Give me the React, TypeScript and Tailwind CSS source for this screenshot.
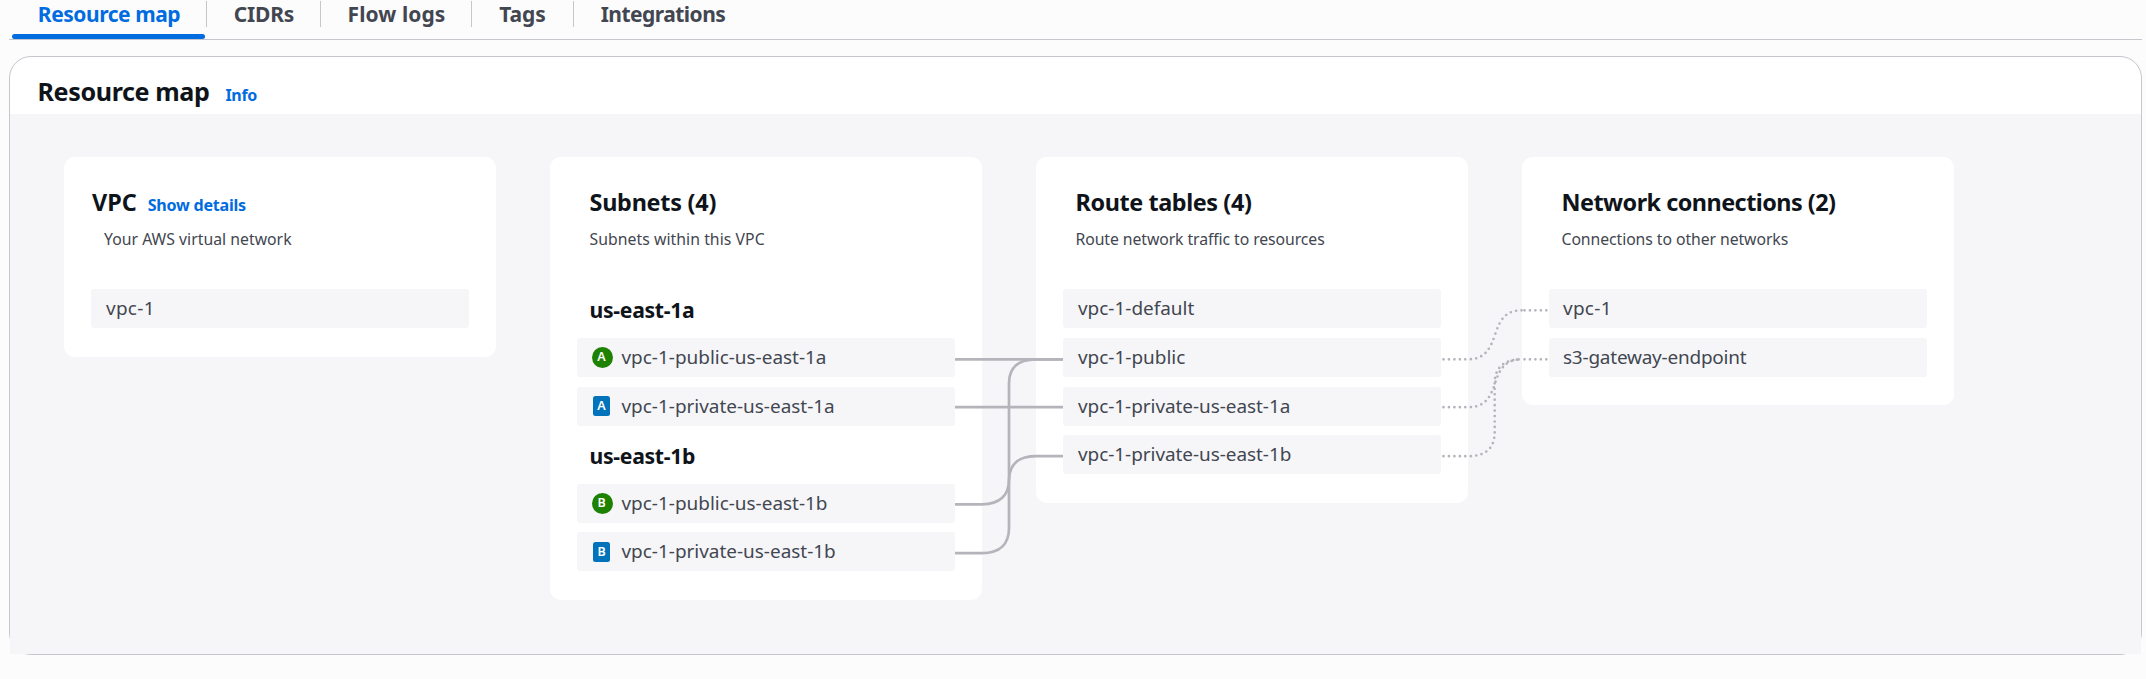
import type { ReactNode } from "react";

type Zone = "A" | "B";

function Item({ children, kind, zone }: { children: ReactNode; kind?: "public" | "private"; zone?: Zone }) {
  return (
    <li className="flex h-[39px] items-center rounded-[3px] bg-[#f6f6f9] pl-[15px] text-[18.95px] leading-[39px] text-[#424650]">
      {kind === "public" && (
        <span className="mr-[8.5px] flex size-[21px] items-center justify-center rounded-full bg-[#1d8102] pr-[2px] pb-px text-[12.5px] leading-[20px] font-semibold text-white">
          {zone}
        </span>
      )}
      {kind === "private" && (
        <span className="mr-[11.5px] mb-[0.5px] ml-[1px] flex h-[20px] w-[17px] items-center justify-center rounded-[2.5px] bg-[#0073bb] text-[12.5px] leading-[20px] font-semibold text-white">
          {zone}
        </span>
      )}
      {children}
    </li>
  );
}

function Items({ children }: { children: ReactNode }) {
  return <ul className="flex flex-col gap-[9.75px]">{children}</ul>;
}

function Card({ title, description, children }: { title: ReactNode; description: ReactNode; children: ReactNode }) {
  return (
    <section className="w-[432px] shrink-0 rounded-[11px] bg-white px-[27px] pt-[29px] pb-[28.5px]">
      {title}
      <p className="mt-[9px] mb-[38px] pl-[12.5px] text-[15.77px] leading-[24px] text-[#424650]">{description}</p>
      {children}
    </section>
  );
}

function Heading({ children }: { children: ReactNode }) {
  return <h3 className="pl-[12.5px] text-[23.4px] leading-[32px] font-bold text-[#0f141a]">{children}</h3>;
}

function Connectors() {
  return (
    <svg
      className="pointer-events-none absolute inset-0"
      width="2131"
      height="540"
      viewBox="10 114 2131 540"
      fill="none"
      stroke="#b4b4bb"
    >
      <g strokeWidth="2.7">
        <path d="M955 359.3H1063" />
        <path d="M955 407.2H1063" />
        <path d="M955 504.3H982C1000 504.3 1009 495 1009 480V383C1009 368 1018 359.3 1036 359.3H1063" />
        <path d="M955 553.2H982C1000 553.2 1009 544 1009 528V480C1009 465 1018 456.2 1036 456.2H1063" />
      </g>
      <g strokeWidth="2.7" strokeLinecap="round" strokeDasharray="0 5.45">
        <path d="M1443.5 359.3H1468C1484 359.3 1490 350 1495 334.8C1500 319 1506 310.3 1522 310.3" />
        <path d="M1443.5 407.2H1468C1484 407.2 1490 399 1495 383.3C1500 368 1506 359.3 1522 359.3" />
        <path d="M1443.5 456.2H1468C1486 456.2 1494.7 448 1494.7 432V383C1494.7 368 1504 359.3 1522 359.3" />
        <path d="M1524.5 310.3H1548" />
        <path d="M1524.5 359.3H1548" />
      </g>
    </svg>
  );
}

function Tabs() {
  return (
    <nav className="ml-[9px] flex h-[40px] w-[2133px] border-b border-[#c6c6cd] pl-[3px] text-[21px] leading-[29px] font-bold text-[#424650]">
      <div className="flex w-[194px] flex-col justify-between text-center">
        <span className="tracking-[-0.45px] text-[#006ce0]">Resource map</span>
        <span className="h-[5px] w-[193px] rounded-[3px] bg-[#006ce0]" />
      </div>
      <span className="mt-px h-[26px] w-px bg-[#c6c6cd]" />
      <span className="w-[113px] pl-px text-center tracking-[-0.18px]">CIDRs</span>
      <span className="mt-px h-[26px] w-px bg-[#c6c6cd]" />
      <span className="w-[150px] pl-px text-center tracking-[0.07px]">Flow logs</span>
      <span className="mt-px h-[26px] w-px bg-[#c6c6cd]" />
      <span className="w-[101px] text-center tracking-[-0.06px]">Tags</span>
      <span className="mt-px h-[26px] w-px bg-[#c6c6cd]" />
      <span className="w-[178px] text-center tracking-[-0.54px]">Integrations</span>
    </nav>
  );
}

export default function App() {
  return (
    <div className="h-[679px] w-[2146px] overflow-hidden bg-[#fcfcfd] font-['Noto_Sans',sans-serif]">
      <Tabs />
      <main className="mt-[16px] ml-[9px] h-[599px] w-[2133px] rounded-[22px] border border-[#c6c6cd] bg-white">
        <header className="flex h-[57px] items-baseline pt-[18px] pl-[27.5px]">
          <h2 className="text-[25.1px] leading-[32px] font-bold tracking-[-0.38px] text-[#0f141a]">Resource map</h2>
          <a className="ml-[16px] text-[16px] font-bold tracking-[-0.35px] text-[#006ce0]">Info</a>
        </header>
        <div className="relative flex h-[540px] items-start gap-[54px] bg-[#f6f6f9] pt-[43px] pl-[54px]">
          <Card
            title={
              <div className="flex h-[32px] items-baseline pl-px">
                <h3 className="text-[23.4px] leading-[32px] font-bold text-[#0f141a]">VPC</h3>
                <a className="ml-[11px] text-[16.1px] font-bold tracking-[-0.25px] text-[#006ce0]">Show details</a>
              </div>
            }
            description={<span className="pl-[0.5px] tracking-[0.02px]">Your AWS virtual network</span>}
          >
            <Items>
              <Item><span className="tracking-[0.3px]">vpc-1</span></Item>
            </Items>
          </Card>

          <Card
            title={<Heading><span className="tracking-[-0.24px]">Subnets (4)</span></Heading>}
            description={<span className="tracking-[0.05px]">Subnets within this VPC</span>}
          >
            <h4 className="pt-[6.75px] pb-[14px] pl-[12.5px] text-[21.2px] leading-[28px] font-bold tracking-[-0.3px] text-[#0f141a]">us-east-1a</h4>
            <Items>
              <Item kind="public" zone="A">vpc-1-public-us-east-1a</Item>
              <Item kind="private" zone="A">vpc-1-private-us-east-1a</Item>
            </Items>
            <h4 className="pt-[16px] pb-[14px] pl-[12.5px] text-[21.2px] leading-[28px] font-bold tracking-[-0.3px] text-[#0f141a]">us-east-1b</h4>
            <Items>
              <Item kind="public" zone="B">vpc-1-public-us-east-1b</Item>
              <Item kind="private" zone="B">vpc-1-private-us-east-1b</Item>
            </Items>
          </Card>

          <Card
            title={<Heading><span className="tracking-[-0.4px]">Route tables (4)</span></Heading>}
            description={<span className="tracking-[-0.08px]">Route network traffic to resources</span>}
          >
            <Items>
              <Item>vpc-1-default</Item>
              <Item>vpc-1-public</Item>
              <Item><span className="tracking-[-0.04px]">vpc-1-private-us-east-1a</span></Item>
              <Item><span className="tracking-[-0.04px]">vpc-1-private-us-east-1b</span></Item>
            </Items>
          </Card>

          <Card
            title={<Heading><span className="tracking-[-0.52px]">Network connections (2)</span></Heading>}
            description={<span className="tracking-[-0.07px]">Connections to other networks</span>}
          >
            <Items>
              <Item><span className="-ml-px tracking-[0.3px]">vpc-1</span></Item>
              <Item><span className="-ml-px tracking-[-0.2px]">s3-gateway-endpoint</span></Item>
            </Items>
          </Card>
          <Connectors />
        </div>
      </main>
    </div>
  );
}
